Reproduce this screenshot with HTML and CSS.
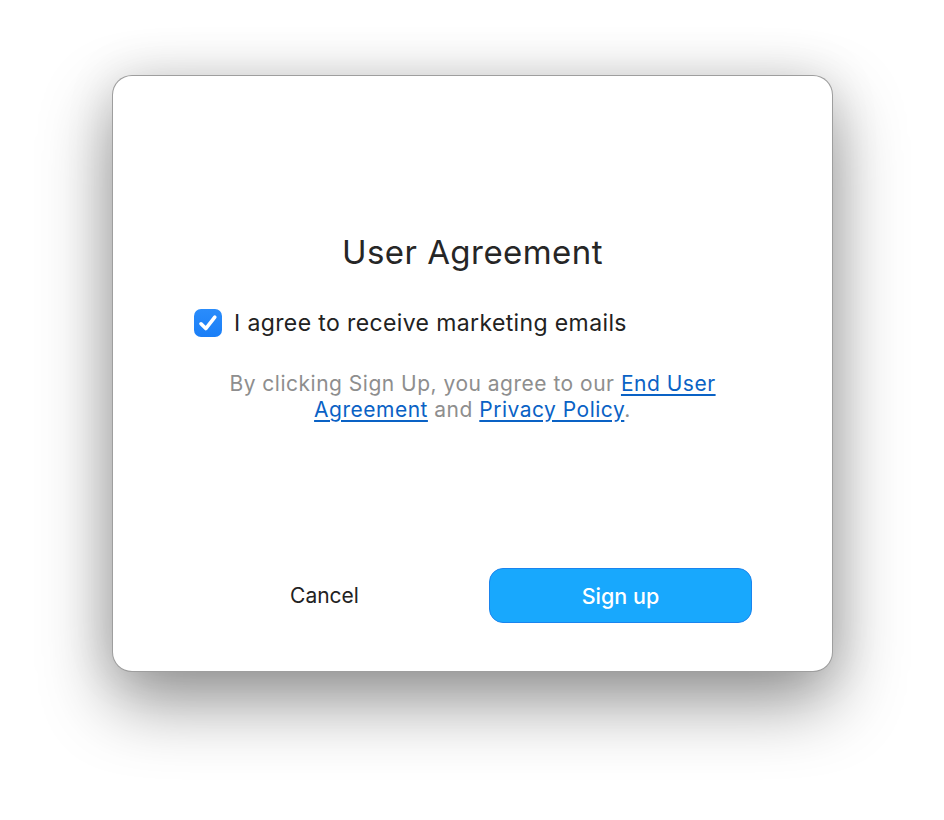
FILE: index.html
```html
<!DOCTYPE html>
<html lang="en">
<head>
<meta charset="utf-8">
<title>User Agreement</title>
<link rel="stylesheet" href="styles.css">
</head>
<body>
<div class="window">
  <div class="content">
    <h1 class="title">User Agreement</h1>
    <label class="check-row">
      <span class="checkbox">
        <svg viewBox="0 0 28 28" width="28" height="28"><path d="M7 14.8 L11.8 19.6 L20.8 8.2" fill="none" stroke="#fff" stroke-width="3.6" stroke-linecap="round" stroke-linejoin="round"/></svg>
      </span>
      <span class="check-label">I agree to receive marketing emails</span>
    </label>
    <p class="terms">By clicking Sign Up, you agree to our <a href="#" class="link">End User Agreement</a> and <a href="#" class="link">Privacy Policy</a>.</p>
    <div class="actions">
      <button class="btn btn-cancel">Cancel</button>
      <button class="btn btn-primary">Sign up</button>
    </div>
  </div>
</div>
</body>
</html>
```
FILE: styles.css
```css
* { box-sizing: border-box; }
html, body { margin: 0; background: #fff; }
body {
  width: 944px;
  height: 820px;
  padding: 75px 0 0 112px;
  font-family: Inter, "Noto Sans", "Liberation Sans", sans-serif;
  overflow: hidden;
}
.window {
  width: 721px;
  height: 597px;
  background: #fff;
  border: 1px solid rgba(0,0,0,0.38);
  border-radius: 20px;
  box-shadow: 0 30px 70px rgba(0,0,0,0.42), 0 0 50px rgba(0,0,0,0.10);
}
.content {
  display: flex;
  flex-direction: column;
  padding: 156px 80px 0 80px;
}
.title {
  margin: 0;
  font-size: 33px;
  line-height: 40px;
  font-weight: 400;
  letter-spacing: 0.45px;
  color: #262626;
  text-align: center;
}
.check-row {
  margin-top: 37px;
  display: flex;
  align-items: center;
  gap: 12px;
  height: 28px;
  padding-left: 1px;
}
.checkbox {
  width: 28px;
  height: 28px;
  border-radius: 7px;
  background: linear-gradient(#2a8cfb, #1a7ef7);
  display: flex;
  flex-shrink: 0;
}
.check-label {
  font-size: 23px;
  letter-spacing: 0.38px;
  color: #222;
}
.terms {
  margin: 34px auto 0;
  max-width: 520px;
  font-size: 21px;
  line-height: 26px;
  letter-spacing: 0.5px;
  color: #8e8e8e;
  text-align: center;
}
.link {
  color: #0a62c5;
  text-decoration: underline;
  text-underline-offset: 3px;
}
.actions {
  margin-top: 145px;
  display: grid;
  grid-template-columns: 1fr 1fr;
  gap: 33px;
}
.btn {
  height: 55px;
  border-radius: 14px;
  font-family: inherit;
  font-size: 21px;
  cursor: pointer;
}
.btn-cancel {
  background: transparent;
  border: none;
  color: #222;
  font-weight: 400;
}
.btn-primary {
  background: #18a8fd;
  border: 1px solid #1a84ee;
  color: #fff;
  font-weight: 500;
  font-size: 21.5px;
}
```
